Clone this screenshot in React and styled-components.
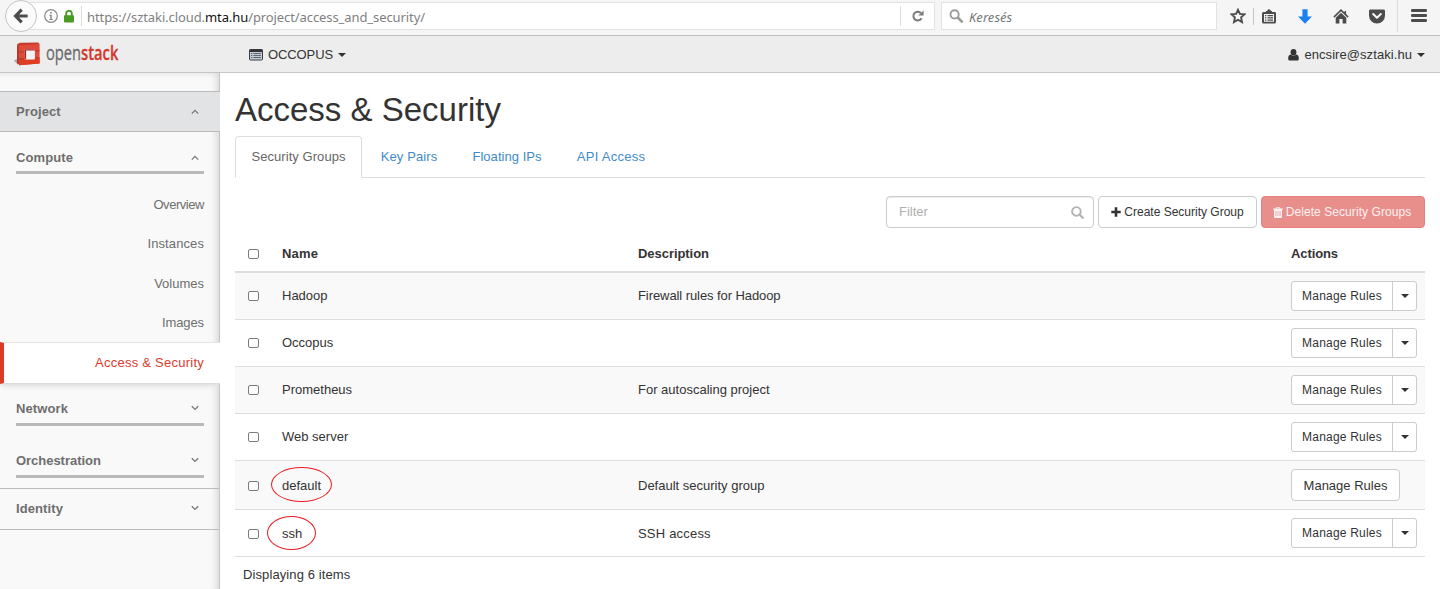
import React from "react";
import styled, { createGlobalStyle } from "styled-components";

const Global = createGlobalStyle`
  * { box-sizing: border-box; }
  html, body { margin: 0; padding: 0; }
  body {
    font-family: "Liberation Sans", Arial, sans-serif;
    font-size: 13px;
    line-height: 18px;
    color: #333;
    background: #fff;
    overflow: hidden;
  }
`;

const Page = styled.div`
  width: 1440px;
  height: 589px;
  display: flex;
  flex-direction: column;
  overflow: hidden;
`;

const Text = styled.span`
  letter-spacing: ${(p) => p.$ls || 0}px;
  white-space: nowrap;
`;

/* ---------- browser toolbar ---------- */

const BrowserBar = styled.div`
  height: 36px;
  flex: none;
  display: flex;
  align-items: flex-start;
  background: #f5f5f5;
  border-bottom: 1px solid #bfbfbf;
  font-family: "Noto Sans", "Open Sans", sans-serif;
  color: #808080;
`;

const BackButton = styled.div`
  position: relative;
  z-index: 1;
  width: 32px;
  height: 32px;
  margin-left: 5px;
  border: 1px solid #c4c4c4;
  border-radius: 50%;
  background: #fbfbfb;
  display: flex;
  align-items: center;
  justify-content: center;
`;

const AddressField = styled.div`
  display: flex;
  align-items: center;
  flex: none;
  width: 911px;
  height: 28px;
  margin: 2px 0 0 -13px;
  padding-left: 19px;
  border: 1px solid #e1e1e1;
  background: #fff;
`;

const FieldRule = styled.i`
  width: 1px;
  height: 20px;
  background: #ddd;
  margin-left: ${(p) => p.$left || 0}px;
`;

const Url = styled.span`
  flex: 1;
  margin-left: 5px;
  padding-top: 1px;
  font-size: 13px;
  letter-spacing: -0.09px;
  white-space: nowrap;
  b { font-weight: 400; color: #111; }
`;

const ReloadSlot = styled.div`
  width: 34px;
  height: 20px;
  border-left: 1px solid #ddd;
  display: flex;
  align-items: center;
  justify-content: center;
`;

const SearchField = styled.div`
  display: flex;
  align-items: center;
  gap: 5px;
  width: 276px;
  height: 28px;
  margin: 2px 0 0 6px;
  padding-left: 7px;
  border: 1px solid #e1e1e1;
  background: #fff;
  font-size: 13px;
  font-style: italic;
  color: #777;
`;

const SearchHint = styled(Text)`
  padding-top: 1px;
`;

const ToolStrip = styled.div`
  display: flex;
  align-items: center;
  height: 32px;
  margin-left: 12px;
`;

const ToolSlot = styled.div`
  width: ${(p) => p.$w}px;
  flex: none;
  height: 100%;
  display: flex;
  align-items: center;
  justify-content: center;
`;

const ToolRule = styled.i`
  width: 1px;
  height: ${(p) => p.$h}px;
  margin-left: ${(p) => p.$ml || 0}px;
  background: ${(p) => p.$c};
`;

/* ---------- dashboard header ---------- */

const TopBar = styled.header`
  height: 37px;
  flex: none;
  display: flex;
  align-items: center;
  background: #ededed;
  border-bottom: 1px solid #c6c6c6;
  padding-right: 15px;
`;

const Brand = styled.div`
  width: 249px;
  height: 36px;
  padding: 0 0 0 14px;
  display: flex;
  align-items: center;
`;

const Wordmark = styled.span`
  margin: -3px 0 0 6px;
  font-family: "Open Sans", "Noto Sans", sans-serif;
  font-size: 20px;
  line-height: 24px;
  color: #6b6b6b;
  -webkit-text-stroke: 0.3px currentColor;
  transform: scaleX(0.735);
  transform-origin: 0 50%;
  white-space: nowrap;
  b { font-weight: 600; color: #d5352c; }
`;

const ProjectPicker = styled.div`
  flex: 1;
  display: flex;
  align-items: center;
  gap: 5px;
  padding-top: 1px;
`;

const UserMenu = styled.div`
  display: flex;
  align-items: center;
  gap: 5px;
  padding-top: 2px;
`;

/* ---------- sidebar ---------- */

const Body = styled.div`
  flex: 1;
  display: flex;
  min-height: 0;
`;

const Sidebar = styled.nav`
  width: 220px;
  flex: none;
  padding-top: 18px;
  background: #f9f9f9;
  border-right: 1px solid #c4c4c4;
  box-shadow: inset -5px 2px 6px -2px rgba(0, 0, 0, 0.12);
  color: #6e6e6e;
`;

const PanelHead = styled.div`
  display: flex;
  align-items: center;
  justify-content: space-between;
  width: ${(p) => (p.$open ? 220 : 219)}px;
  height: ${(p) => p.$h}px;
  padding: 0 ${(p) => (p.$open ? 21 : 20)}px 0 16px;
  border-top: 1px solid #bbb;
  border-bottom: 1px solid #bbb;
  background: ${(p) => (p.$open ? "#e2e3e5" : "transparent")};
  font-weight: 700;
`;

const GroupHead = styled.div`
  display: flex;
  align-items: center;
  justify-content: space-between;
  height: ${(p) => p.$h}px;
  margin: ${(p) => p.$top}px 15px ${(p) => p.$bottom}px 16px;
  padding: ${(p) => p.$pt || 0}px 5px 0 0;
  border-bottom: 3px solid #b9b9b9;
  font-weight: 700;
`;

const NavItem = styled.div`
  height: 39.5px;
  padding-right: 15px;
  display: flex;
  align-items: center;
  justify-content: flex-end;
`;

const ActiveItem = styled(NavItem)`
  position: relative;
  width: 220px;
  height: 42px;
  margin-top: -1px;
  padding-right: 16px;
  border-top: 1px solid #e4e4e4;
  border-bottom: 1px solid #dcdcdc;
  border-left: 4px solid #dd3b26;
  background: #fff;
  box-shadow: -3px 4px 6px -3px rgba(0, 0, 0, 0.16);
  color: #dc3a2c;
`;

/* ---------- content ---------- */

const Content = styled.main`
  flex: 1;
  padding: 16px 15px 0;
`;

const Title = styled.h1`
  margin: 0;
  height: 47px;
  font-size: 33px;
  line-height: 41px;
  font-weight: 400;
  color: #333;
`;

const Tabs = styled.div`
  display: flex;
  height: 42px;
  border-bottom: 1px solid #ddd;
`;

const Tab = styled.div`
  height: 42px;
  width: ${(p) => p.$w}px;
  padding-top: 11px;
  text-align: center;
  border: 1px solid ${(p) => (p.$active ? "#ddd" : "transparent")};
  border-bottom-color: ${(p) => (p.$active ? "#fff" : "transparent")};
  border-radius: 4px 4px 0 0;
  background: ${(p) => (p.$active ? "#fff" : "transparent")};
  color: ${(p) => (p.$active ? "#666" : "#428bca")};
`;

const Toolbar = styled.div`
  display: flex;
  justify-content: flex-end;
  gap: 4px;
  margin-top: 18px;
`;

const FilterBox = styled.div`
  width: 208px;
  height: 32px;
  padding: 0 9px 0 12px;
  border: 1px solid #ccc;
  border-radius: 4px;
  box-shadow: inset 0 1px 1px rgba(0, 0, 0, 0.075);
  color: #b0b0b0;
  display: flex;
  align-items: center;
  justify-content: space-between;
`;

const Button = styled.div`
  height: 32px;
  width: ${(p) => p.$w}px;
  display: flex;
  align-items: center;
  justify-content: center;
  gap: 3px;
  padding: ${(p) => p.$pad || 0};
  border: 1px solid ${(p) => (p.$danger ? "#e68080" : "#ccc")};
  border-radius: 4px;
  background: ${(p) => (p.$danger ? "#e88f8c" : "#fff")};
  color: ${(p) => (p.$danger ? "#fdf1f1" : "#333")};
  font-size: ${(p) => p.$size || 12}px;
`;

const SplitButton = styled.div`
  display: flex;
  width: 126px;
  height: 30px;
  border: 1px solid #ccc;
  border-radius: 3px;
  background: #fff;
  font-size: 12px;
`;

const SplitMain = styled.div`
  flex: 1;
  display: flex;
  align-items: center;
  justify-content: center;
`;

const SplitToggle = styled.div`
  width: 24px;
  border-left: 1px solid #ccc;
  display: flex;
  align-items: center;
  justify-content: center;
`;

const Caret = styled.i`
  border: 4px solid transparent;
  border-top-color: #333;
  border-bottom: 0;
`;

const Row = styled.div`
  display: grid;
  grid-template-columns: 47px 356px 653px 1fr;
  align-items: center;
  height: ${(p) => p.$h}px;
  padding-top: ${(p) => (p.$head ? 8 : 0)}px;
  border-bottom: ${(p) => (p.$head ? 2 : 1)}px solid #ddd;
  background: ${(p) => (p.$odd ? "#f9f9f9" : "#fff")};
  font-weight: ${(p) => (p.$head ? 700 : 400)};
  & > :not(:last-child) { margin-top: ${(p) => p.$drop || 0}px; }
`;

const Check = styled.i`
  width: 11px;
  height: 10px;
  margin-left: 13px;
  border: 1px solid #7c7c7c;
  border-radius: 2px;
  background: #fff;
`;

const NameCell = styled.div`
  position: relative;
`;

const Ring = styled.i`
  position: absolute;
  left: ${(p) => p.$x}px;
  top: ${(p) => p.$y}px;
  width: ${(p) => p.$w}px;
  height: ${(p) => p.$h}px;
  border: 1px solid #ed1c24;
  border-radius: 50%;
`;

const Footer = styled.div`
  padding: 9px 8px;
`;

/* ---------- icons ---------- */

const ChevronSvg = styled.svg`
  margin-bottom: ${(p) => (p.$up ? 0 : 2)}px;
`;

const Chevron = ({ up }) => (
  <ChevronSvg $up={up} width="8" height="6" viewBox="0 0 8 6" fill="none" stroke="#777" strokeWidth="1.300">
    <path d={up ? "M.8 4.600 4 1.400l3.200 3.200" : "M.8 1.200 4 4.400l3.200-3.200"} />
  </ChevronSvg>
);

const BackIcon = () => (
  <svg width="16" height="16" viewBox="0 0 16 16" fill="none" stroke="#4c4c4c" strokeWidth="3.200">
    <path d="M8.700 1.600 2.600 8l6.100 6.400M3 8h11.600" />
  </svg>
);

const InfoIcon = () => (
  <svg width="14" height="14" viewBox="0 0 14 14">
    <circle cx="7" cy="7" r="6.300" fill="none" stroke="#8a8a8a" strokeWidth="1.200" />
    <path d="M6.200 3h1.600v1.600H6.200zM5.400 5.800h2.300v4.200h1v1H5.400v-1h1V6.800h-1z" fill="#808080" />
  </svg>
);

const LockIcon = () => (
  <svg width="10" height="13" viewBox="0 0 10 13">
    <path d="M2.200 6V3.600a2.800 2.800 0 0 1 5.600 0V6" fill="none" stroke="#4a9a23" strokeWidth="1.800" />
    <rect y="5.200" width="10" height="7.200" rx=".8" fill="#4a9a23" />
  </svg>
);

const ReloadIcon = () => (
  <svg width="12" height="12" viewBox="0 0 12 12">
    <path d="M9.600 8.300A4.400 4.400 0 1 1 9 3" fill="none" stroke="#7c7c7c" strokeWidth="2" />
    <path d="M11.600.4v5.200H6.200z" fill="#7c7c7c" />
  </svg>
);

const MagnifierIcon = () => (
  <svg width="15" height="15" viewBox="0 0 15 15" fill="none" stroke="#9a9a9a">
    <circle cx="5.600" cy="5.400" r="4.100" strokeWidth="1.900" />
    <path d="m8.700 8.500 4.900 4.900" strokeWidth="2.600" />
  </svg>
);

const StarIcon = () => (
  <svg width="16" height="16" viewBox="0 0 16 16" fill="none" stroke="#4c4c4c" strokeWidth="1.900">
    <path d="m8 1.800 1.900 4.100 4.500.5-3.300 3 .9 4.700-4-2.300-4 2.300.9-4.700-3.300-3 4.500-.5z" />
  </svg>
);

const ClipboardIcon = () => (
  <svg width="14" height="15" viewBox="0 0 14 15">
    <path
      fill="#4c4c4c"
      fillRule="evenodd"
      d="M4 2h1.200a1.800 1.800 0 0 1 3.600 0H10v1h2.500A1.500 1.500 0 0 1 14 4.500v8.500A1.500 1.500 0 0 1 12.500 14.500h-11A1.500 1.500 0 0 1 0 13V4.500A1.500 1.500 0 0 1 1.500 3H4zM2 5v7.800h10V5z"
    />
    <path fill="#4c4c4c" d="M3 6h1.300v1.200H3zM5.500 6H11v1.200H5.500zM3 8.300h1.300v1.200H3zM5.500 8.300H11v1.200H5.500zM3 10.600h1.300v1.200H3zM5.500 10.600H11v1.200H5.500z" />
  </svg>
);

const DownloadIcon = () => (
  <svg width="14" height="15" viewBox="0 0 14 15">
    <path d="M4.400.3h5.200v7.200H14L7 14.700 0 7.500h4.400z" fill="#1a82f0" />
  </svg>
);

const HomeIcon = () => (
  <svg width="16" height="15" viewBox="0 0 16 15" fill="#4c4c4c">
    <path d="M8 3.700 13.300 8.800V14.500H9.600V10H6.400v4.500H2.700V8.800z" />
    <path d="m.9 8.100 7.100-7 7.100 7M12.300 2v3" fill="none" stroke="#4c4c4c" strokeWidth="1.500" />
  </svg>
);

const PocketIcon = () => (
  <svg width="16" height="15" viewBox="0 0 16 15">
    <path d="M1.600.5h12.800A1.500 1.500 0 0 1 16 2v4.500a8 8 0 0 1-16 0V2A1.500 1.500 0 0 1 1.600.5z" fill="#4c4c4c" />
    <path d="M4.200 5 8 8.700 11.800 5" fill="none" stroke="#f5f5f5" strokeWidth="2.100" strokeLinecap="round" strokeLinejoin="round" />
  </svg>
);

const MenuIcon = () => (
  <svg width="16" height="14" viewBox="0 0 16 14" fill="#4c4c4c">
    <rect y="0" width="16" height="3" rx="1.300" />
    <rect y="5" width="16" height="3" rx="1.300" />
    <rect y="10" width="16" height="3" rx="1.300" />
  </svg>
);

const OpenStackMark = () => (
  <svg width="26" height="24" viewBox="0 0 26 24">
    <path d="M0 18.500 4 16.500v6.500z" fill="#a5a5a5" />
    <path d="M3 2.200 6 .8 24 .4l1.500 1.200L22 4H5z" fill="#c23d2e" />
    <path d="M3 2.200 5.500 4v19l-2.500-2z" fill="#b83a2d" />
    <path fillRule="evenodd" d="M5 3.500 25.600 2v19.500L5 23.200zM10.800 7.300v10.400h9.900V7.300z" fill="#e04a3a" />
    <path d="M5 17h5.800v.7h9.900v-1.200l4.900-.3v5.300L5 23.200z" fill="#dd3d22" />
    <path d="m10.800 7.300 1.500 1.300v8l-1.500 1.100z" fill="#8e2b22" />
    <path d="M12.300 8.500h8.400v8.200h-8.400z" fill="#f2f2f2" />
    <path d="M10.800 7.300h9.900v1.200h-8.400z" fill="#a83026" />
    <path d="M3 9.300l2.500.8h4M21.500 9l4-.3M3 16l2.500.8h4M21.500 16l4-.3" fill="none" stroke="#a5352a" strokeWidth=".9" />
  </svg>
);

const ListIcon = () => (
  <svg width="14" height="12" viewBox="0 0 14 12">
    <rect x=".5" y=".5" width="13" height="10.500" rx="1" fill="#c3cbd5" stroke="#3b4048" />
    <path d="M.5.5h13V3H.5z" fill="#333" />
    <path d="M2 4.500h1.300M4.300 4.500H12M2 6.500h1.300M4.300 6.500H12M2 8.500h1.300M4.300 8.500H12" stroke="#5d6673" />
  </svg>
);

const UserIcon = () => (
  <svg width="11" height="12" viewBox="0 0 11 12" fill="#333">
    <ellipse cx="5.500" cy="3.300" rx="2.900" ry="3.200" />
    <path d="M2.600 5.600C.8 5.800.2 7.500.2 9.700c0 1.200.7 1.900 1.800 1.900h7c1.100 0 1.800-.7 1.800-1.900 0-2.200-.6-3.900-2.400-4.100-1.500 1.500-4.300 1.500-5.800 0z" />
  </svg>
);

const FilterIcon = () => (
  <svg width="13" height="13" viewBox="0 0 13 13" fill="none" stroke="#b3b3b3">
    <circle cx="5.400" cy="5.400" r="4.300" strokeWidth="1.900" />
    <path d="m8.500 8.500 3.300 3.300" strokeWidth="2.300" strokeLinecap="round" />
  </svg>
);

const PlusIcon = () => (
  <svg width="10" height="10" viewBox="0 0 10 10" stroke="#333" strokeWidth="2.600">
    <path d="M5 .3v9.400M.3 5h9.400" />
  </svg>
);

const TrashIcon = () => (
  <svg width="10" height="11" viewBox="0 0 10 11">
    <path
      fill="#fdf1f1"
      fillRule="evenodd"
      d="M3.300 0h3.400l.6 1.500H10v1H9V10a1 1 0 0 1-1 1H2a1 1 0 0 1-1-1V2.500H0v-1h2.700zM3.900.8l-.3.7h2.800L6.100.8zM2.600 4v5h.7V4zM4.650 4v5h.7V4zM6.700 4v5h.7V4z"
    />
  </svg>
);

/* ---------- data ---------- */

const navItems = [
  ["Overview", -0.45],
  ["Instances", 0.1],
  ["Volumes", 0],
  ["Images", -0.1],
];

const tabs = [
  { label: "Security Groups", w: 127, ls: 0.06, active: true },
  { label: "Key Pairs", w: 94, ls: 0.1 },
  { label: "Floating IPs", w: 102, ls: 0.04 },
  { label: "API Access", w: 106, ls: 0.27 },
];

const groups = [
  { name: "Hadoop", desc: "Firewall rules for Hadoop", ls: -0.08 },
  { name: "Occopus", desc: "" },
  { name: "Prometheus", desc: "For autoscaling project" },
  { name: "Web server", desc: "" },
  { name: "default", desc: "Default security group", single: true, drop: 2, ring: { $x: -11, $y: -10, $w: 61, $h: 35 } },
  { name: "ssh", desc: "SSH access", ls: 0.2, drop: 1, ring: { $x: -15, $y: -9, $w: 49, $h: 34 } },
];

export default function App() {
  return (
    <Page>
      <Global />
      <BrowserBar>
        <BackButton><BackIcon /></BackButton>
        <AddressField>
          <InfoIcon />
          <ToolSlot $w={22}><LockIcon /></ToolSlot>
          <FieldRule $left={1} />
          <Url>https://sztaki.cloud.<b>mta.hu</b>/project/access_and_security/</Url>
          <ReloadSlot><ReloadIcon /></ReloadSlot>
        </AddressField>
        <SearchField><MagnifierIcon /><SearchHint $ls={0.05}>Keresés</SearchHint></SearchField>
        <ToolStrip>
          <ToolSlot $w={18}><StarIcon /></ToolSlot>
          <ToolSlot $w={12}><ToolRule $h={17} $c="#c4c4c4" /></ToolSlot>
          <ToolSlot $w={20}><ClipboardIcon /></ToolSlot>
          <ToolSlot $w={52}><DownloadIcon /></ToolSlot>
          <ToolSlot $w={20}><HomeIcon /></ToolSlot>
          <ToolSlot $w={52}><PocketIcon /></ToolSlot>
          <ToolRule $h={32} $c="#dcdcdc" $ml={-6} />
          <ToolSlot $w={42}><MenuIcon /></ToolSlot>
        </ToolStrip>
      </BrowserBar>

      <TopBar>
        <Brand>
          <OpenStackMark />
          <Wordmark>open<b>stack</b></Wordmark>
        </Brand>
        <ProjectPicker>
          <ListIcon />
          <Text $ls={-0.1}>OCCOPUS</Text>
          <Caret />
        </ProjectPicker>
        <UserMenu>
          <UserIcon />
          <Text $ls={0.07}>encsire@sztaki.hu</Text>
          <Caret />
        </UserMenu>
      </TopBar>

      <Body>
        <Sidebar>
          <PanelHead $h={41} $open><Text $ls={0.1}>Project</Text><Chevron up /></PanelHead>
          <GroupHead $h={34} $top={8} $bottom={11} $pt={5}><Text $ls={0.1}>Compute</Text><Chevron up /></GroupHead>
          {navItems.map(([label, ls]) => (
            <NavItem key={label}><Text $ls={ls}>{label}</Text></NavItem>
          ))}
          <ActiveItem><Text $ls={0.25}>Access &amp; Security</Text></ActiveItem>
          <GroupHead $h={34} $top={8} $bottom={18} $pt={2}><Text $ls={0.1}>Network</Text><Chevron /></GroupHead>
          <GroupHead $h={34} $top={0} $bottom={10} $pt={2}><Text $ls={-0.03}>Orchestration</Text><Chevron /></GroupHead>
          <PanelHead $h={42}><Text $ls={0.1}>Identity</Text><Chevron /></PanelHead>
        </Sidebar>

        <Content>
          <Title>Access &amp; Security</Title>
          <Tabs>
            {tabs.map((t) => (
              <Tab key={t.label} $w={t.w} $active={t.active}><Text $ls={t.ls}>{t.label}</Text></Tab>
            ))}
          </Tabs>
          <Toolbar>
            <FilterBox><Text>Filter</Text><FilterIcon /></FilterBox>
            <Button $w={159}><PlusIcon /><Text>Create Security Group</Text></Button>
            <Button $w={164} $danger $pad="0 2px 0 0"><TrashIcon /><Text $ls={0.07}>Delete Security Groups</Text></Button>
          </Toolbar>

          <Row $head $h={45}>
            <Check />
            <Text $ls={0.2}>Name</Text>
            <Text $ls={-0.05}>Description</Text>
            <Text $ls={-0.1}>Actions</Text>
          </Row>
          {groups.map((g, i) => (
            <Row key={g.name} $odd={i % 2 === 0} $h={g.single ? 49 : 47} $drop={g.drop}>
              <Check />
              <NameCell>
                <Text>{g.name}</Text>
                {g.ring && <Ring {...g.ring} />}
              </NameCell>
              <Text $ls={g.ls}>{g.desc}</Text>
              {g.single ? (
                <Button $w={109} $size={13} $pad="2px 0 0"><Text>Manage Rules</Text></Button>
              ) : (
                <SplitButton>
                  <SplitMain><Text $ls={0.2}>Manage Rules</Text></SplitMain>
                  <SplitToggle><Caret /></SplitToggle>
                </SplitButton>
              )}
            </Row>
          ))}
          <Footer><Text $ls={0.1}>Displaying 6 items</Text></Footer>
        </Content>
      </Body>
    </Page>
  );
}
